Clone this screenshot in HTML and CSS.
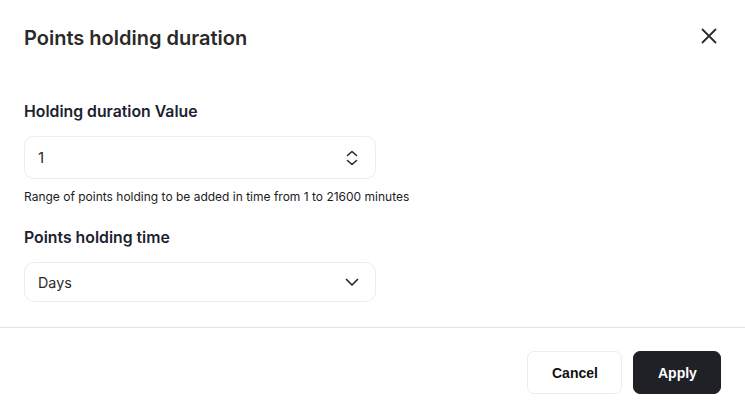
FILE: index.html
```html
<!DOCTYPE html>
<html lang="en">
<head>
<meta charset="utf-8">
<title>Points holding duration</title>
<link rel="stylesheet" href="styles.css">
</head>
<body>
<div class="modal">
  <div class="modal-header">
    <h1 class="modal-title">Points holding duration</h1>
    <button class="close-btn" aria-label="Close">
      <svg width="16" height="16" viewBox="0 0 16 16" fill="none" stroke="#2b2b2b" stroke-width="1.8" stroke-linecap="round"><path d="M1.5 1.5L14.5 14.5M14.5 1.5L1.5 14.5"/></svg>
    </button>
  </div>
  <div class="modal-body">
    <label class="field-label">Holding duration Value</label>
    <div class="input-box">
      <span class="input-value">1</span>
      <svg width="14" height="18" viewBox="0 0 14 18" fill="none" stroke="#2b2b2b" stroke-width="1.6" stroke-linecap="round" stroke-linejoin="round"><path d="M2.5 6.5L7 2.5L11.5 6.5"/><path d="M2.5 11.5L7 15.5L11.5 11.5"/></svg>
    </div>
    <p class="help-text">Range of points holding to be added in time from 1 to 21600 minutes</p>
    <label class="field-label second">Points holding time</label>
    <div class="input-box select">
      <span class="select-value">Days</span>
      <svg width="14" height="9" viewBox="0 0 14 9" fill="none" stroke="#2b2b2b" stroke-width="1.7" stroke-linecap="round" stroke-linejoin="round"><path d="M1.5 1.5L7 7L12.5 1.5"/></svg>
    </div>
  </div>
  <div class="modal-footer">
    <button class="btn btn-cancel">Cancel</button>
    <button class="btn btn-apply">Apply</button>
  </div>
</div>
</body>
</html>
```
FILE: styles.css
```css
* { box-sizing: border-box; }
html, body { margin: 0; padding: 0; background: #fff; }
body { font-family: Inter, "Noto Sans", sans-serif; color: #1c2230; }
.modal { width: 745px; height: 419px; background: #fff; }
.modal-header {
  display: flex; align-items: center; justify-content: space-between;
  padding: 24px 24px 0 24px; height: 52px;
}
.modal-title {
  margin: 0; font-size: 20px; line-height: 28px; font-weight: 600; color: #2a2a2a;
}
.close-btn {
  border: 0; background: none; padding: 0; width: 20px; height: 20px;
  display: flex; align-items: center; justify-content: center;
  margin-right: 2px; margin-top: -4px;
}
.modal-body {
  padding: 50px 24px 0 24px; display: flex; flex-direction: column; align-items: flex-start;
}
.field-label {
  font-size: 15.8px; line-height: 20px; font-weight: 600; color: #1c2230;
}
.field-label.second { margin-top: 23px; }
.input-box {
  margin-top: 14px; width: 352px; height: 43px;
  border: 1px solid #ececec; border-radius: 10px;
  display: flex; align-items: center; justify-content: space-between;
  padding: 0 16px 0 13px;
}
.input-box.select { height: 40px; padding-right: 16px; }
.input-value { font-size: 15px; color: #2a2a2a; }
.select-value { font-size: 14.3px; color: #2a2a2a; }
.help-text {
  margin: 10px 0 0 0; font-size: 12px; line-height: 16px; color: #1c1c1c;
}
.modal-footer {
  margin-top: 25px; border-top: 1px solid #e2e2e2;
  display: flex; justify-content: flex-end; gap: 11px;
  padding: 23px 24px 0 24px;
}
.btn {
  height: 43px; border-radius: 7px; padding: 0 24px;
  font-family: "Liberation Sans", Arial, sans-serif; font-weight: 700; font-size: 14px;
}
.btn-cancel { background: #fff; border: 1px solid #ececec; color: #111; width: 95px; }
.btn-apply { background: #202027; border: 1px solid #202027; color: #fff; width: 88px; }
```
